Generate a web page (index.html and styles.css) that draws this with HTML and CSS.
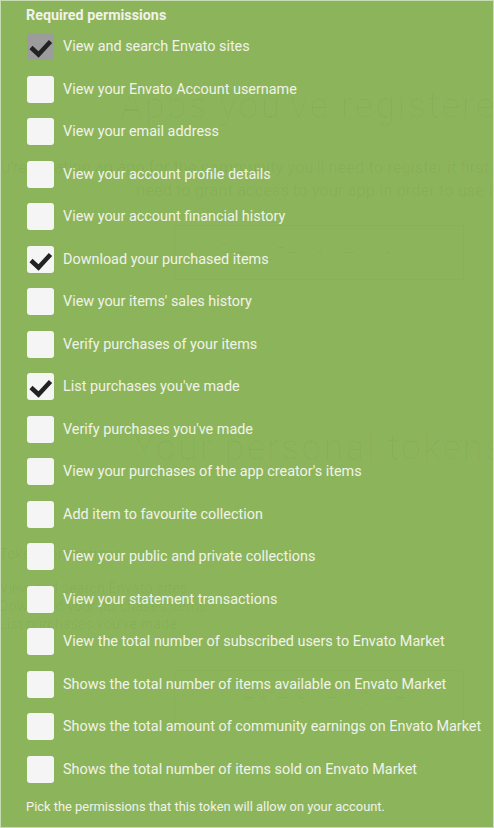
FILE: index.html
```html
<!DOCTYPE html>
<html>
	<head>
		<meta charset="utf-8" />
		<meta name="viewport" content="width=device-width, initial-scale=1" />
		<title>Token permissions</title>
		<link rel="stylesheet" href="styles.css">
	</head>

	<body>
		<div class="backdrop">
			<h2 class="backdrop-title first">Apps you've registered</h2>
			<p class="backdrop-intro">
				If you're creating an app for the community you'll need to register it first. Anyone who uses it will<br />
				need to grant access to your app in order to use it.
			</p>
			<div class="backdrop-button">Register a new app</div>
			<h2 class="backdrop-title second">Your personal tokens</h2>
			<div class="backdrop-list">
				<div class="backdrop-head">Token permissions</div>
				<div>View and search Envato sites</div>
				<div>Download your purchased items</div>
				<div>List purchases you've made</div>
			</div>
			<div class="backdrop-button lower">Create a new token</div>
		</div>

		<section class="panel">
			<h3 class="panel-title">Required permissions</h3>
			<ul class="perms">
				<li><span class="box disabled checked"><svg viewBox="0 0 27 27"><path d="M4 14.5l7.5 7L23.5 8.5" /></svg></span>View and search Envato sites</li>
				<li><span class="box"></span>View your Envato Account username</li>
				<li><span class="box"></span>View your email address</li>
				<li><span class="box"></span>View your account profile details</li>
				<li><span class="box"></span>View your account financial history</li>
				<li><span class="box checked"><svg viewBox="0 0 27 27"><path d="M4 14.5l7.5 7L23.5 8.5" /></svg></span>Download your purchased items</li>
				<li><span class="box"></span>View your items' sales history</li>
				<li><span class="box"></span>Verify purchases of your items</li>
				<li><span class="box checked"><svg viewBox="0 0 27 27"><path d="M4 14.5l7.5 7L23.5 8.5" /></svg></span>List purchases you've made</li>
				<li><span class="box"></span>Verify purchases you've made</li>
				<li><span class="box"></span>View your purchases of the app creator's items</li>
				<li><span class="box"></span>Add item to favourite collection</li>
				<li><span class="box"></span>View your public and private collections</li>
				<li><span class="box"></span>View your statement transactions</li>
				<li><span class="box"></span>View the total number of subscribed users to Envato Market</li>
				<li><span class="box"></span>Shows the total number of items available on Envato Market</li>
				<li><span class="box"></span>Shows the total amount of community earnings on Envato Market</li>
				<li><span class="box"></span>Shows the total number of items sold on Envato Market</li>
			</ul>
			<p class="hint">Pick the permissions that this token will allow on your account.</p>
		</section>
	</body>
</html>
```

FILE: styles.css
```css
html,
body {
	margin: 0;
	padding: 0;
}

body {
	background: #8cb55b;
	font-family: Roboto, "Liberation Sans", sans-serif;
	color: #f1f2ea;
	overflow: hidden;
}

/* page behind the green overlay, barely visible */
.backdrop {
	position: absolute;
	top: 0;
	left: -61px;
	width: 760px;
	color: rgba(0, 0, 0, 0.045);
	text-align: center;
	white-space: nowrap;
}

.backdrop-title {
	margin: 0;
	font-size: 36px;
	line-height: 36px;
	font-weight: 300;
	letter-spacing: 2px;
	color: rgba(0, 0, 0, 0.028);
}

.backdrop-title.first {
	margin-top: 88px;
}

.backdrop-title.second {
	margin-top: 150px;
}

.backdrop-intro {
	margin: 32px 0 0;
	font-size: 16.5px;
	line-height: 23px;
}

.backdrop-button {
	width: 288px;
	height: 53px;
	margin: 23px auto 0;
	border: 1px solid rgba(0, 0, 0, 0.02);
	font-size: 24px;
	font-weight: 300;
	line-height: 53px;
	color: rgba(0, 0, 0, 0.028);
}

.backdrop-button.lower {
	margin-top: 36px;
}

.backdrop-list {
	margin-top: 80px;
	padding-left: 60px;
	text-align: left;
	font-size: 14.5px;
	line-height: 18px;
}

.backdrop-head {
	margin-bottom: 16px;
}

/* overlay */
.panel {
	position: relative;
	box-sizing: border-box;
	height: 828px;
	border: 1px solid #c8dcb3;
	padding: 6px 25px 0;
}

.panel-title {
	margin: 0;
	font-size: 14.3px;
	line-height: 16px;
	font-weight: 700;
}

.perms {
	list-style: none;
	margin: 10px 0 0 1px;
	padding: 0;
	display: flex;
	flex-direction: column;
	gap: 15.5px;
}

.perms li {
	display: flex;
	align-items: center;
	gap: 9px;
	font-size: 14.4px;
	line-height: 27px;
	white-space: nowrap;
}

.box {
	flex: none;
	width: 27px;
	height: 27px;
	border-radius: 3px;
	background: #f5f5f5;
}

.box.disabled {
	background: #9c9c9c;
}

.box svg {
	display: block;
	width: 27px;
	height: 27px;
}

.box path {
	fill: none;
	stroke: #222;
	stroke-width: 4.5;
	stroke-linejoin: miter;
}

.hint {
	margin: 17px 0 0;
	font-size: 12.9px;
	line-height: 14px;
}
```
